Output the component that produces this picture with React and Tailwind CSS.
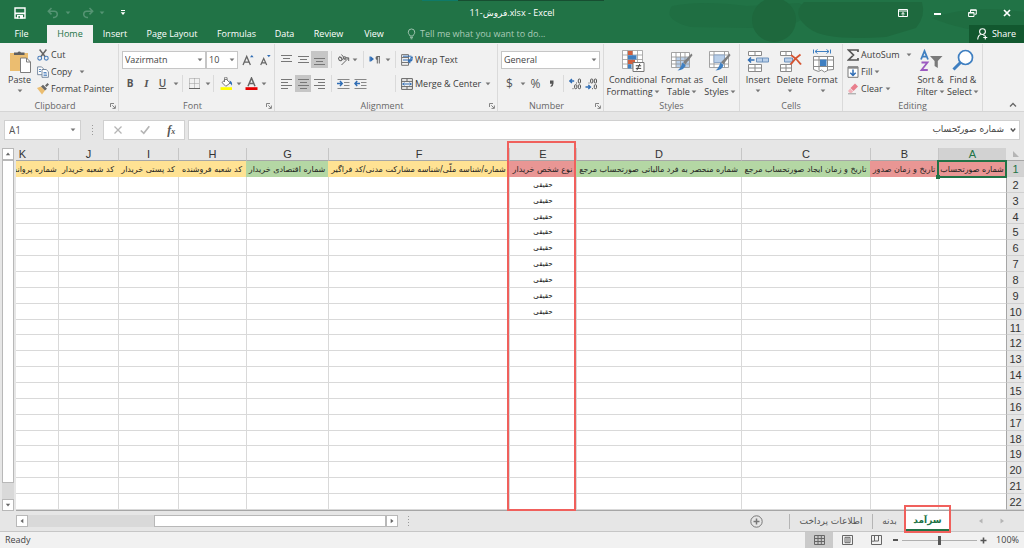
import React from "react";

const Caret = ({ className = "" }) => (
  <svg viewBox="0 0 6 4" className={`h-[4px] w-[6px] shrink-0 fill-[#777] ${className}`} aria-hidden="true">
    <path d="M.6.5h4.8L3 3.3z" />
  </svg>
);

const VSep = () => <span className="h-[17px] w-px shrink-0 bg-[#dadada]" />;

/* ---------- title bar ---------- */

const WindowArt = () => (
  <svg className="absolute right-0 top-0 h-full w-[360px]" viewBox="0 0 360 43" preserveAspectRatio="none" aria-hidden="true">
    <path d="M8 6q30-6 75 0l52-3q20 10-8 22l-40 3-60-1Q-2 20 8 6z" fill="#1f6e42" />
    <circle cx="110" cy="20" r="22" fill="#1e683d" />
    <path d="M140 2h118q4 14-6 26l-30 9q-60 4-76-8-20-14-6-27z" fill="#1e693e" />
    <path d="M268 18q40-14 92-6v18q-50 6-92-12z" fill="#1f6d41" />
  </svg>
);

function TitleBar() {
  return (
    <div className="relative grid h-[25px] grid-cols-[1fr_auto_1fr] items-center text-white">
      <div className="flex items-center pl-[14px]">
        <button aria-label="Save" className="w-[12px]">
          <svg viewBox="0 0 12 12" className="size-[12px]">
            <path d="M1 1h10v10H1z" fill="none" stroke="#fff" strokeWidth="1.4" />
            <path d="M1 5.6h10v1.6H1zM3 8h6v3.5H3z" fill="#fff" />
            <path d="M4.5 9h1.3v2.2H4.5z" fill="#217346" />
          </svg>
        </button>
        <button aria-label="Undo" className="ml-[21px]">
          <svg viewBox="0 0 12 12" className="size-[12px]" fill="none" stroke="#559473" strokeWidth="1.5">
            <path d="M4.5 1L1.3 4.2l3.2 3.2M1.5 4.2h5.7a3 3 0 010 6.2H6" />
          </svg>
        </button>
        <Caret className="ml-[6px] fill-[#559473]" />
        <button aria-label="Redo" className="ml-[11px]">
          <svg viewBox="0 0 12 12" className="size-[12px]" fill="none" stroke="#559473" strokeWidth="1.5">
            <path d="M7.5 1l3.2 3.2-3.2 3.2M10.500 4.200H4.800a3 3 0 000 6.200H6" />
          </svg>
        </button>
        <Caret className="ml-[5px] fill-[#559473]" />
        <button aria-label="Customize Quick Access Toolbar" className="ml-[15px]">
          <svg viewBox="0 0 6 6" className="size-[6px]" fill="#fff">
            <path d="M1 0h4v1H1zM.7 2.300h4.600L3 5z" />
          </svg>
        </button>
      </div>
      <h1 className="flex text-[9px]">
        <bdi className="font-['Open_Sans','DejaVu_Sans',sans-serif]" dir="ltr">
          11-&#x202B;فروش&#x202C;.xlsx - Excel
        </bdi>
      </h1>
      <div className="flex items-center justify-end">
        <button aria-label="Ribbon Display Options" className="flex w-[35px] justify-center">
          <svg viewBox="0 0 10 8" className="h-[8px] w-[10px]" fill="none" stroke="#fff">
            <path d="M.5.5h9v7h-9zM.5 2h9M5 6.800V3.800M3.400 5L5 3.600 6.600 5" />
          </svg>
        </button>
        <button aria-label="Minimize" className="flex w-[35px] justify-center">
          <span className="mt-[3px] h-[2px] w-[7px] bg-white" />
        </button>
        <button aria-label="Restore Down" className="flex w-[35px] justify-center">
          <svg viewBox="0 0 9 8" className="h-[8px] w-[9px]" fill="none" stroke="#fff">
            <path d="M.6 3.500h5.400v4H.6zM2.500 3V.8h5.800v4.400H6.500M2.500 1.300h5.800M.6 4h5.400" />
          </svg>
        </button>
        <button aria-label="Close" className="flex w-[34px] justify-center">
          <svg viewBox="0 0 8 8" className="size-[8px]" stroke="#fff" strokeWidth="1.7">
            <path d="M1 1l6 6M7 1L1 7" />
          </svg>
        </button>
      </div>
    </div>
  );
}

const tabs = [
  ["Insert", "w-[44px]"],
  ["Page Layout", "w-[70px]"],
  ["Formulas", "w-[59px]"],
  ["Data", "w-[37px]"],
  ["Review", "w-[51px]"],
  ["View", "w-[40px]"],
];

function TabBar() {
  return (
    <nav className="relative flex h-[18px] items-stretch text-[9px] text-white">
      <button className="w-[43px]">File</button>
      <button className="ml-[4px] w-[46px] bg-[#f1f1f1] text-[#217346]">Home</button>
      {tabs.map(([name, width]) => (
        <button key={name} className={width}>{name}</button>
      ))}
      <button className="ml-[13px] flex items-center gap-[4px] text-[#a9cbb8]">
        <svg viewBox="0 0 10 12" className="h-[12px] w-[9px]" fill="none" stroke="#a9cbb8">
          <path d="M3.200 8.200C3.200 6.800 1.400 6 1.400 4a3.600 3.600 0 017.200 0c0 2-1.800 2.800-1.800 4.200zM3.300 9.700h3.400M4 11.300h2" />
        </svg>
        Tell me what you want to do...
      </button>
      <button className="ml-auto flex w-[55px] items-center justify-center gap-[4px] bg-[#12582f]">
        <svg viewBox="0 0 11 12" className="h-[12px] w-[11px]" fill="none" stroke="#fff" strokeWidth="1.100">
          <circle cx="5.500" cy="3.600" r="2.900" />
          <path d="M.7 11.500c.2-3 1.400-4.600 3-5M6.500 7l1 .8M8.300 7.500v4M6.300 9.500h4" />
        </svg>
        Share
      </button>
    </nav>
  );
}

/* ---------- ribbon ---------- */

function Group({ title, width, launcher, children }) {
  return (
    <section aria-label={title} className={`flex h-[67px] shrink-0 flex-col border-r border-[#dadada] ${width}`}>
      <div className="flex h-[56px] items-start">{children}</div>
      <div className="flex h-[11px] items-center leading-none">
        <span className="flex-1 text-center text-[#666]">{title}</span>
        {launcher && (
          <button aria-label={`${title} settings`} className="mr-[2px]">
            <svg viewBox="0 0 6 6" className="size-[6px]" fill="none" stroke="#777">
              <path d="M.5 4V.5H4M2.300 2.300L5 5M5.400 2.500v2.900H2.500" strokeWidth=".9" />
            </svg>
          </button>
        )}
      </div>
    </section>
  );
}

function BigButton({ icon, lines, width, arrowBelow }) {
  return (
    <button className={`flex shrink-0 flex-col items-center pt-[4px] leading-[12px] ${width}`}>
      <span className="flex h-[26px] items-center">{icon}</span>
      <span className="whitespace-nowrap">{lines[0]}</span>
      {arrowBelow ? (
        <Caret className="mt-[3px]" />
      ) : (
        <span className="flex items-center gap-[1px] whitespace-nowrap">{lines[1]}<Caret /></span>
      )}
    </button>
  );
}

function SmallButton({ icon, label, caret, caretGap = "ml-[2px]" }) {
  return (
    <button className="flex h-[17px] items-center whitespace-nowrap">
      <span className="mr-[2px] flex w-[12px] shrink-0 justify-center">{icon}</span>
      {label}
      {caret && <Caret className={caretGap} />}
    </button>
  );
}

function IconButton({ label, width, active, children }) {
  return (
    <button aria-label={label} className={`flex h-[17px] shrink-0 items-center justify-center ${width} ${active ? "bg-[#c6c6c6]" : ""}`}>
      {children}
    </button>
  );
}

function Dropdown({ label, width, options }) {
  return (
    <span className={`relative flex h-[18px] items-center border border-[#c6c6c6] bg-white ${width}`}>
      <select aria-label={label} className="h-full w-full appearance-none bg-transparent pl-[2px] text-[9px] text-[#444] outline-none">
        {options.map((o) => <option key={o}>{o}</option>)}
      </select>
      <Caret className="pointer-events-none absolute right-[2px]" />
    </span>
  );
}

const Lines = ({ d }) => (
  <svg viewBox="0 0 11 11" className="size-[11px]" stroke="#777" fill="none"><path d={d} /></svg>
);

const PasteIcon = () => (
  <svg viewBox="0 0 22 23" className="h-[23px] w-[22px]">
    <path d="M1 3h18v18H1z" fill="#ebbd70" />
    <path d="M5 5V2.500h3.500a2 2 0 013.500 0h3.500V5z" fill="#5f5f5f" />
    <path d="M11.500 8h6l4 4v10.500h-10z" fill="#fff" stroke="#7d7d7d" />
    <path d="M17.500 8v4h4" fill="none" stroke="#7d7d7d" />
  </svg>
);
const CutIcon = () => (
  <svg viewBox="0 0 12 12" className="size-[12px]" fill="none">
    <path d="M2.600.5l5.600 7.200M9.400.5L3.800 7.700" stroke="#666" strokeWidth="1.500" />
    <circle cx="2.700" cy="9.200" r="1.900" stroke="#4a7ebb" strokeWidth="1.100" />
    <circle cx="9.300" cy="9.200" r="1.900" stroke="#4a7ebb" strokeWidth="1.100" />
  </svg>
);
const CopyIcon = () => (
  <svg viewBox="0 0 12 12" className="size-[12px]" fill="#fff" stroke="#6c7f96" strokeWidth=".9">
    <path d="M.6.900h4l1.800 1.800v6H.6z" />
    <path d="M5 3.500h4.200l2.200 2.200v5.600H5z" />
    <path d="M2 3.500h2M2 5.500h2M6.500 6.500h3M6.500 8h3.500M6.500 9.600h3.500" stroke="#4a7ebb" />
  </svg>
);
const PainterIcon = () => (
  <svg viewBox="0 0 12 12" className="size-[12px]">
    <path d="M0 5l4-1.500 4 4L5 11.500z" fill="#ebbd70" />
    <path d="M4 3.500l2-1.700 4 4-2 1.700zM8 2.500L10.500 0 12 1.500 9.500 4z" fill="#666" />
  </svg>
);
const FontSizeIcon = ({ up }) => (
  <svg viewBox="0 0 12 12" className="size-[12px]">
    {up ? (
      <path d="M1 11L4.700 2.500 8.400 11M2.300 8.200h4.800" fill="none" stroke="#666" strokeWidth="1.300" />
    ) : (
      <path d="M1.700 11L4.700 4.500 7.700 11M2.700 8.800h4" fill="none" stroke="#666" strokeWidth="1.200" />
    )}
    <path d={up ? "M8 3.200L9.800 1l1.800 2.200z" : "M8 1h3.600L9.800 3.200z"} fill="#2f6db5" />
  </svg>
);
const BorderIcon = () => (
  <svg viewBox="0 0 11 11" className="size-[11px]" fill="none" stroke="#999">
    <path d="M.5.500h10v10H.5zM5.500.5v10M.5 5.500h10" strokeDasharray="1 1" />
    <path d="M0 10.500h11" stroke="#666" />
  </svg>
);
const FillColorIcon = () => (
  <svg viewBox="0 0 13 13" className="size-[13px]">
    <path d="M2 5.500L6 2l4.200 4-4.400 3.300z" fill="#fff" stroke="#777" />
    <path d="M4.500 5V1.300a1.300 1.300 0 012.600 0V3" fill="none" stroke="#777" />
    <path d="M9.500 3.500q3.200 1 2.500 5.200-1-2-2-2.300z" fill="#2f6db5" />
    <path d="M.5 10.200h11.500v2.800H.5z" fill="#ffff00" />
  </svg>
);
const FontColorIcon = () => (
  <svg viewBox="0 0 13 13" className="size-[13px]">
    <path d="M3 9.200L6.500 1 10 9.200M4.200 6.500h4.600" fill="none" stroke="#666" strokeWidth="1.500" />
    <path d="M.5 10.200h12v2.800H.5z" fill="#e60000" />
  </svg>
);
const OrientationIcon = () => (
  <svg viewBox="0 0 13 12" className="h-[12px] w-[13px]" fill="none" stroke="#666">
    <ellipse cx="3.300" cy="4.800" rx="1.600" ry="1.900" transform="rotate(-40 3.300 4.800)" />
    <path d="M2.500 2.500l3.400 3.700M4.500.500l4 5M4.500 11L11.500 4M8.500 3.800h3.200V7" />
    <circle cx="7.600" cy="4" r="1.400" />
  </svg>
);
const RtlIcon = () => (
  <svg viewBox="0 0 12 10" className="h-[10px] w-[12px]">
    <path d="M.5 1.500h1.400v5H.5zM2 1.500L5 4 2 6.500z" fill="#2f6db5" />
    <path d="M8 1.500h3M8.300 1.500v7M10.300 1.500v7" stroke="#666" fill="none" />
    <path d="M8.500 1a2 2 0 000 4z" fill="#666" />
  </svg>
);
const IndentIcon = ({ flip }) => (
  <svg viewBox="0 0 13 11" className="h-[11px] w-[13px]" fill="none">
    <path d="M.5 1.500h12M7 4.500h5.500M7 7.500h5.500M.5 10.500h12" stroke="#888" />
    <path d={flip ? "M1 5.500h5M3.200 3L1 5.500 3.200 8" : "M0 5.500h5M3 3l2.200 2.500L3 8"} stroke="#2f6db5" strokeWidth="1.500" />
  </svg>
);
const WrapIcon = () => (
  <svg viewBox="0 0 12 12" className="size-[12px]" fill="none">
    <path d="M.6.600h6.900v10.700H.6zM.6 3.500h6.900M.6 8.500h6.900" stroke="#777" />
    <path d="M2 2.200h8.500M2 6h7.800V3.500h1.700" stroke="#2f6db5" />
    <path d="M11 2.500v2.800q0 2-3 2M9.300 5.500L7.500 7.300l1.800 1.800" stroke="#2f6db5" strokeWidth="1.200" />
  </svg>
);
const MergeIcon = () => (
  <svg viewBox="0 0 12 12" className="size-[12px]" fill="none">
    <path d="M.6.600h10.800v10.800H.6zM.6 3.400h10.800M.6 8.600h10.800M6 .6v2.800M6 8.600v2.800" stroke="#666" />
    <path d="M1.500 6h9M3.300 4.500L1.800 6l1.500 1.500M8.700 4.500L10.200 6 8.700 7.500" stroke="#2f6db5" />
  </svg>
);
const DecimalIcon = ({ more }) => (
  <svg viewBox="0 0 13 12" className="h-[12px] w-[13px]" fill="none" stroke="#555" strokeWidth="1">
    {more ? (
      <>
        <path d="M.5 3h4.700M3 1L.8 3 3 5" stroke="#2f6db5" strokeWidth="1.300" />
        <path d="M7.500 4.500v1M4 10.200v1" />
        <rect x="9.300" y="1" width="2.200" height="4" rx="1" />
        <rect x="5.600" y="6.700" width="2.200" height="4" rx="1" />
        <rect x="9.300" y="6.700" width="2.200" height="4" rx="1" />
      </>
    ) : (
      <>
        <path d="M.5 9h4.700M3.300 7l2.200 2-2.200 2" stroke="#2f6db5" strokeWidth="1.300" />
        <path d="M4 4.500v1M7.500 10.200v1" />
        <rect x="5.600" y="1" width="2.200" height="4" rx="1" />
        <rect x="9.300" y="1" width="2.200" height="4" rx="1" />
        <rect x="9.300" y="6.700" width="2.200" height="4" rx="1" />
      </>
    )}
  </svg>
);
const Brush = () => (
  <>
    <path d="M21.500 4.500l1 1.800-7 9-2.500-2z" fill="#7f7f7f" />
    <path d="M12.500 13.500l3 2.500q-1 5-8 5.500 3-2 5-8z" fill="#3f7fc1" />
  </>
);
const ConditionalIcon = () => (
  <svg viewBox="0 0 24 24" className="size-[24px]">
    <path d="M1.500 1.500h20v18h-20zM1.500 6h20M1.500 10.500h20M1.500 15h20M6.500 1.500v18M11.500 1.500v18M16.500 1.500v18" fill="#fff" stroke="#9a9a9a" strokeWidth=".8" />
    <path d="M7 1.900h4.500V6H7zM7 10.800h7V15H7z" fill="#d0603f" />
    <path d="M7 6.300h8.500v4.200H7zM7 15.300h3.500v4.200H7z" fill="#3f7fc1" />
    <path d="M12 13.500h11v9H12z" fill="#fff" stroke="#777" />
    <path d="M14.800 16.800h5.400M14.800 19.400h5.400M18.900 14.800l-3 6.400" stroke="#444" fill="none" />
  </svg>
);
const FormatTableIcon = () => (
  <svg viewBox="0 0 24 24" className="size-[24px]">
    <path d="M1.500 3.500h18v15h-18z" fill="#fff" />
    <path d="M6 8h13.500v10.500H6z" fill="#b9cfe9" />
    <path d="M1.500 3.500h18v15h-18zM1.500 8h18M1.500 11.500h18M1.500 15h18M6 3.500v15M10.500 3.500v15M15 3.500v15" fill="none" stroke="#9a9a9a" strokeWidth=".9" />
    <Brush />
  </svg>
);
const CellStylesIcon = () => (
  <svg viewBox="0 0 24 24" className="size-[24px]">
    <path d="M1.500 2.500h19v16h-19zM1.500 6h19M1.500 15h19M6 2.500v16M16.500 2.500v16" fill="#fff" stroke="#9a9a9a" strokeWidth=".9" />
    <path d="M6 6h10.500v7.500H6z" fill="#b9cfe9" stroke="#8fa8c8" />
    <Brush />
  </svg>
);
const InsertIcon = () => (
  <svg viewBox="0 0 24 22" className="h-[22px] w-[24px]" fill="none">
    <path d="M2.500 1.500h13v4h-13zM9 1.500v4M2.500 14.500h13v7h-13zM9 14.500v7M2.500 18h13" fill="#fff" stroke="#8a8a8a" />
    <path d="M10.500 8h12v4h-12zM16.500 8v4" fill="#b9cfe9" stroke="#6f93bd" />
    <path d="M2.500 10h6M5 7.500L2.500 10 5 12.500" stroke="#2f6db5" strokeWidth="1.500" />
  </svg>
);
const DeleteIcon = () => (
  <svg viewBox="0 0 24 22" className="h-[22px] w-[24px]" fill="none">
    <path d="M2.500 1.500h11v4h-11zM8 1.500v4M2.500 14.500h11v7h-11zM8 14.500v7M2.500 18h11" fill="#fff" stroke="#8a8a8a" />
    <path d="M6.500 8h8v4h-8z" fill="#b9cfe9" stroke="#6f93bd" />
    <path d="M13 5q5 3 10 9.500M22.500 4.500Q17 8 12.500 14.500" stroke="#d65532" strokeWidth="2" />
  </svg>
);
const FormatIcon = () => (
  <svg viewBox="0 0 24 24" className="size-[24px]" fill="none">
    <path d="M2.500 7.500h20v13l-5 .5-4 2-3-2-3 1.500-5-2zM2.500 11h20M2.500 17.500h20M8 7.500v14M16.500 7.500v14" fill="#fff" stroke="#8a8a8a" />
    <path d="M9 10.500h6.500v6.500H9z" fill="#3f7fc1" />
    <path d="M2.500.500v4M19.500.500v4M4 2.500h14M6.500.500L4 2.500l2.500 2M15.500.500l2.500 2-2.500 2" stroke="#3f7fc1" />
  </svg>
);
const SigmaIcon = () => (
  <svg viewBox="0 0 12 12" className="size-[12px]" fill="none" stroke="#555" strokeWidth="1.700">
    <path d="M11 3V1H1.500L6.500 6l-5 5H11V9" />
  </svg>
);
const FillDownIcon = () => (
  <svg viewBox="0 0 12 12" className="size-[12px]" fill="none">
    <path d="M1 .8h10v10.500H1z" fill="#fff" stroke="#777" />
    <path d="M1 .5h10v2.200H1z" fill="#888" />
    <path d="M6 3.500v6M3.300 6.800L6 9.500l2.700-2.700" stroke="#2f6db5" strokeWidth="1.500" />
  </svg>
);
const ClearIcon = () => (
  <svg viewBox="0 0 12 12" className="size-[12px]">
    <path d="M3.500 5L8 .5l3 3L6.500 8z" fill="#e87e8c" />
    <path d="M3.200 5.400l3 3L4.500 10H2.800L1 8z" fill="#f3b3bb" />
    <path d="M1 10.800h8" stroke="#999" />
  </svg>
);
const SortIcon = () => (
  <svg viewBox="0 0 24 24" className="size-[24px]" fill="none">
    <path d="M2 10.500L5.500 2 9 10.500M3.300 7.600h4.400" stroke="#3f7fc1" strokeWidth="1.800" />
    <path d="M2.500 13.500h6l-6 7.500h6.300" stroke="#9b59c0" strokeWidth="1.800" />
    <path d="M11 7h12.500l-4.700 5v7l-3.200-2v-5z" fill="#7a7a7a" />
  </svg>
);
const FindIcon = () => (
  <svg viewBox="0 0 24 24" className="size-[24px]" fill="none">
    <path d="M9.500 13.500L2.500 20.500" stroke="#3f7fc1" strokeWidth="3" />
    <circle cx="14.500" cy="8.500" r="7" stroke="#3f7fc1" strokeWidth="1.700" fill="#fff" />
  </svg>
);

function Ribbon() {
  return (
    <div className="flex h-[69px] shrink-0 items-start border-b border-[#d5d5d5] bg-[#f1f1f1] pt-[1px] text-[#3c3c3c]">
      <Group title="Clipboard" width="w-[119px]" launcher>
        <BigButton icon={<PasteIcon />} lines={["Paste"]} arrowBelow width="ml-[4px] w-[31px]" />
        <div className="ml-[2px] flex flex-col pt-[2px]">
          <SmallButton icon={<CutIcon />} label="Cut" />
          <SmallButton icon={<CopyIcon />} label="Copy" caret caretGap="ml-[7px]" />
          <SmallButton icon={<PainterIcon />} label="Format Painter" />
        </div>
      </Group>

      <Group title="Font" width="w-[156px]" launcher>
        <div className="flex flex-col gap-[6px] pl-[3px] pt-[7px]">
          <div className="flex items-center">
            <Dropdown label="Font" width="w-[84px]" options={["Vazirmatn", "Calibri", "Arial"]} />
            <Dropdown label="Font size" width="w-[32px]" options={["10", "11", "12"]} />
            <IconButton label="Increase font size" width="ml-[2px] w-[16px]"><FontSizeIcon up /></IconButton>
            <IconButton label="Decrease font size" width="w-[17px]"><FontSizeIcon /></IconButton>
          </div>
          <div className="flex items-center text-[10px] text-[#555]">
            <IconButton label="Bold" width="w-[16px]"><b>B</b></IconButton>
            <IconButton label="Italic" width="w-[17px]"><i className="font-['Liberation_Serif',serif] text-[11px] font-bold">I</i></IconButton>
            <IconButton label="Underline" width="w-[15px]"><u className="font-semibold">U</u></IconButton>
            <IconButton label="Underline styles" width="w-[12px]"><Caret /></IconButton>
            <VSep />
            <IconButton label="Borders" width="ml-[3px] w-[16px]"><BorderIcon /></IconButton>
            <IconButton label="Border styles" width="w-[11px]"><Caret /></IconButton>
            <VSep />
            <IconButton label="Fill color" width="ml-[4px] w-[16px]"><FillColorIcon /></IconButton>
            <IconButton label="Fill color choices" width="w-[9px]"><Caret /></IconButton>
            <IconButton label="Font color" width="w-[16px]"><FontColorIcon /></IconButton>
            <IconButton label="Font color choices" width="w-[9px]"><Caret /></IconButton>
          </div>
        </div>
      </Group>

      <Group title="Alignment" width="w-[223px]" launcher>
        <div className="flex flex-col gap-[7px] pl-[3px] pt-[7px]">
          <div className="flex items-center">
            <IconButton label="Top align" width="w-[17px]"><Lines d="M0 1.500h11M2 4.500h7M0 7.500h11" /></IconButton>
            <IconButton label="Middle align" width="w-[16px]"><Lines d="M0 2.500h11M2 5.500h7M0 8.500h11" /></IconButton>
            <IconButton label="Bottom align" width="w-[17px]" active><Lines d="M0 4.500h11M2 7.500h7M0 10.500h11" /></IconButton>
            <span className="w-[3px]" />
            <VSep />
            <IconButton label="Orientation" width="ml-[3px] w-[16px]"><OrientationIcon /></IconButton>
            <IconButton label="Orientation choices" width="w-[8px]"><Caret /></IconButton>
            <span className="w-[4px]" />
            <VSep />
            <IconButton label="Text direction" width="ml-[3px] w-[16px]"><RtlIcon /></IconButton>
            <IconButton label="Text direction choices" width="w-[9px]"><Caret /></IconButton>
            <span className="w-[3px]" />
            <VSep />
            <span className="w-[5px]" />
            <SmallButton icon={<WrapIcon />} label="Wrap Text" />
          </div>
          <div className="flex items-center">
            <IconButton label="Align left" width="w-[17px]"><Lines d="M0 1.500h11M0 4.500h7M0 7.500h11M0 10.500h7" /></IconButton>
            <IconButton label="Center" width="w-[16px]" active><Lines d="M0 1.500h11M2 4.500h7M0 7.500h11M2 10.500h7" /></IconButton>
            <IconButton label="Align right" width="w-[17px]"><Lines d="M0 1.500h11M4 4.500h7M0 7.500h11M4 10.500h7" /></IconButton>
            <span className="w-[3px]" />
            <VSep />
            <IconButton label="Increase indent" width="ml-[3px] w-[17px]"><IndentIcon /></IconButton>
            <IconButton label="Decrease indent" width="w-[16px]"><IndentIcon flip /></IconButton>
            <span className="w-[27px]" />
            <VSep />
            <span className="w-[5px]" />
            <SmallButton icon={<MergeIcon />} label="Merge & Center" caret caretGap="ml-[4px]" />
          </div>
        </div>
      </Group>

      <Group title="Number" width="w-[106px]" launcher>
        <div className="flex flex-col gap-[6px] pl-[3px] pt-[7px]">
          <Dropdown label="Number format" width="w-[99px]" options={["General", "Number", "Currency"]} />
          <div className="flex items-center text-[12px] text-[#555]">
            <IconButton label="Accounting format" width="w-[17px]">$</IconButton>
            <IconButton label="Accounting choices" width="w-[9px]"><Caret /></IconButton>
            <IconButton label="Percent style" width="w-[17px]">%</IconButton>
            <IconButton label="Comma style" width="w-[16px]">
              <svg viewBox="0 0 4 7" className="h-[7px] w-[4px]" fill="#555"><path d="M0 .5h3.500v3Q3.500 6 .8 7L.5 6q1.400-.8 1.300-2.200H0z" /></svg>
            </IconButton>
            <span className="w-[3px]" />
            <VSep />
            <IconButton label="Increase decimal" width="ml-[3px] w-[16px]"><DecimalIcon more /></IconButton>
            <IconButton label="Decrease decimal" width="w-[16px]"><DecimalIcon /></IconButton>
          </div>
        </div>
      </Group>

      <Group title="Styles" width="w-[136px]">
        <BigButton icon={<ConditionalIcon />} lines={["Conditional", "Formatting"]} width="ml-[2px] w-[54px]" />
        <BigButton icon={<FormatTableIcon />} lines={["Format as", "Table"]} width="w-[44px]" />
        <BigButton icon={<CellStylesIcon />} lines={["Cell", "Styles"]} width="w-[32px]" />
      </Group>

      <Group title="Cells" width="w-[103px]">
        <BigButton icon={<InsertIcon />} lines={["Insert"]} arrowBelow width="ml-[2px] w-[32px]" />
        <BigButton icon={<DeleteIcon />} lines={["Delete"]} arrowBelow width="w-[32px]" />
        <BigButton icon={<FormatIcon />} lines={["Format"]} arrowBelow width="w-[33px]" />
      </Group>

      <Group title="Editing" width="w-[140px]">
        <div className="ml-[4px] flex w-[67px] flex-col pt-[2px]">
          <SmallButton icon={<SigmaIcon />} label="AutoSum" caret caretGap="ml-[6px]" />
          <SmallButton icon={<FillDownIcon />} label="Fill" caret />
          <SmallButton icon={<ClearIcon />} label="Clear" caret />
        </div>
        <BigButton icon={<SortIcon />} lines={["Sort &", "Filter"]} width="w-[33px]" />
        <BigButton icon={<FindIcon />} lines={["Find &", "Select"]} width="w-[32px]" />
      </Group>

      <button aria-label="Collapse the Ribbon" className="ml-auto mr-[7px] self-end pb-[3px]">
        <svg viewBox="0 0 8 6" className="h-[6px] w-[8px]" fill="none" stroke="#666" strokeWidth="1.300"><path d="M1 4.500l3-3 3 3" /></svg>
      </button>
    </div>
  );
}

/* ---------- formula bar ---------- */

const Dots = () => (
  <span className="flex flex-col gap-[2px]" aria-hidden="true">
    <i className="size-[1px] bg-[#999]" /><i className="size-[1px] bg-[#999]" /><i className="size-[1px] bg-[#999]" /><i className="size-[1px] bg-[#999]" />
  </span>
);

function FormulaBar() {
  return (
    <div className="flex h-[36px] shrink-0 items-center px-[4px]">
      <div className="flex h-[20px] w-[77px] shrink-0 items-center border border-[#d0d0d0] bg-white pr-[4px]">
        <input aria-label="Name Box" defaultValue="A1" className="min-w-0 flex-1 bg-transparent pl-[4px] text-[10px] text-[#555] outline-none" />
        <Caret />
      </div>
      <span className="flex w-[22px] shrink-0 justify-center"><Dots /></span>
      <div className="flex h-[20px] w-[82px] shrink-0 items-center justify-around border border-[#d0d0d0] bg-white">
        <button aria-label="Cancel">
          <svg viewBox="0 0 10 10" className="size-[10px]" stroke="#b5b5b5" strokeWidth="1.300"><path d="M1.500 1.500l7 7M8.500 1.500l-7 7" /></svg>
        </button>
        <button aria-label="Enter">
          <svg viewBox="0 0 10 10" className="size-[10px]" fill="none" stroke="#b5b5b5" strokeWidth="1.700"><path d="M.8 5.500l3 2.800 5.500-7" /></svg>
        </button>
        <button aria-label="Insert Function" className="font-['Liberation_Serif',serif] text-[12px] font-bold italic leading-none text-[#555]">
          f<span className="text-[8px]">x</span>
        </button>
      </div>
      <div className="ml-[3px] flex h-[20px] flex-1 items-center border border-[#d0d0d0] bg-white pr-[3px]">
        <input
          aria-label="Formula Bar"
          dir="rtl"
          defaultValue="شماره صورتّحساب"
          className="min-w-0 flex-1 bg-transparent pr-[6px] font-['DejaVu_Sans',sans-serif] text-[9px] text-[#444] outline-none"
        />
        <svg viewBox="0 0 6 6" className="size-[6px]" fill="none" stroke="#555" strokeWidth="1.400"><path d="M.8 1.500L3 4.200l2.200-2.700" /></svg>
      </div>
    </div>
  );
}

/* ---------- sheet ---------- */

const RED = "bg-[#e99694]";
const GREEN = "bg-[#b4d7a4]";
const YELLOW = "bg-[#ffe293]";

const columns = [
  { id: "A", text: "شماره صورتحساب", fill: RED, width: "w-[68px]" },
  { id: "B", text: "تاریخ و زمان صدور", fill: RED, width: "w-[68px]" },
  { id: "C", text: "تاریخ و زمان ایجاد صورتحساب مرجع", fill: GREEN, width: "w-[129px]" },
  { id: "D", text: "شماره منحصر به فرد مالیاتی صورتحساب مرجع", fill: GREEN, width: "w-[165px]" },
  { id: "E", text: "نوع شخص خریدار", fill: RED, width: "w-[67px]" },
  { id: "F", text: "شماره/شناسه ملّی/شناسه مشارکت مدنی/کد فراگیر", fill: YELLOW, width: "w-[181px]" },
  { id: "G", text: "شماره اقتصادی خریدار", fill: GREEN, width: "w-[82px]" },
  { id: "H", text: "کد شعبه فروشنده", fill: YELLOW, width: "w-[68px]" },
  { id: "I", text: "کد پستی خریدار", fill: YELLOW, width: "w-[60px]" },
  { id: "J", text: "کد شعبه خریدار", fill: YELLOW, width: "w-[60px]" },
  { id: "K", text: "شماره پروانه گمرکی", fill: YELLOW, width: "" },
];
const rows = Array.from({ length: 22 }, (_, i) => i + 1);

const ScrollArrow = ({ label, d }) => (
  <button aria-label={label} className="flex size-[12px] shrink-0 items-center justify-center border border-[#b8b8b8] bg-white">
    <svg viewBox="0 0 6 6" className="size-[6px]" fill="#666"><path d={d} /></svg>
  </button>
);

function Sheet() {
  return (
    <div className="relative flex min-h-0 flex-1">
      <div className="flex w-[16px] shrink-0 flex-col items-center pr-[1px]">
        <ScrollArrow label="Scroll up" d="M.8 4.300h4.400L3 1.500z" />
        <div className="flex w-[12px] flex-1 flex-col bg-[#d9d9d9] pb-[16px]">
          <div className="flex-1 border border-[#b8b8b8] bg-white" />
        </div>
        <ScrollArrow label="Scroll down" d="M.8 1.700h4.400L3 4.500z" />
      </div>
      <div dir="rtl" className="min-w-0 flex-1 overflow-hidden border-b border-[#a6a6a6] bg-white">
        <table className="h-full w-full min-w-[1038px] table-fixed border-separate border-spacing-0 font-['DejaVu_Sans',sans-serif] text-[8px] leading-none">
          <colgroup>
            <col className="w-[18px]" />
            {columns.map((c) => <col key={c.id} className={c.width} />)}
          </colgroup>
          <thead>
            <tr className="h-[13px] bg-[#e6e6e6] font-['Liberation_Sans',sans-serif] text-[11px] text-[#333]">
              <th aria-label="Select all" className="h-[13px] border-b border-[#a6a6a6] p-0">
                <svg viewBox="0 0 6 6" className="ml-auto mr-[5px] size-[6px]" fill="#b5b5b5"><path d="M0 0v6h6z" /></svg>
              </th>
              {columns.map((c) => (
                <th
                  key={c.id}
                  scope="col"
                  className={`h-[13px] border-b border-l border-l-[#c6c6c6] p-0 font-normal ${c.id === "A" ? "border-b-[#217346] bg-[#d2d2d2] text-[#217346]" : "border-b-[#a6a6a6]"}`}
                >
                  {c.id}
                </th>
              ))}
            </tr>
          </thead>
          <tbody>
            {rows.map((n) => (
              <tr key={n}>
                <th
                  scope="row"
                  className={`border-b border-l border-b-[#d0d0d0] px-0 pb-0 pt-[2px] text-center font-['Liberation_Sans',sans-serif] text-[11px] font-normal ${n === 1 ? "border-l-[#217346] bg-[#d2d2d2] text-[#217346]" : "border-l-[#a6a6a6] bg-[#e6e6e6] text-[#333]"}`}
                >
                  {n}
                </th>
                {columns.map((c) => {
                  if (n === 1) {
                    return (
                      <td
                        key={c.id}
                        className={`whitespace-nowrap px-0 pb-0 pt-[2px] text-center text-[#222] ${c.fill} ${c.id === "A" ? "relative outline-2 -outline-offset-1 outline-[#217346]" : "overflow-hidden"}`}
                      >
                        {c.text}
                        {c.id === "A" && <span className="absolute -bottom-[2px] -left-[2px] size-[4px] bg-[#217346]" />}
                      </td>
                    );
                  }
                  return (
                    <td key={c.id} className="border-b border-l border-[#d9d9d9] px-0 pb-0 pt-[2px] text-center text-[7px] text-[#111]">
                      {c.id === "E" && n <= 10 ? "حقیقی" : null}
                    </td>
                  );
                })}
              </tr>
            ))}
          </tbody>
        </table>
      </div>
      <div className="pointer-events-none absolute -top-[7px] bottom-0 right-[448px] z-10 w-[69px] border-2 border-[#f0605c]" />
    </div>
  );
}

function SheetTabs() {
  return (
    <div className="flex h-[21px] shrink-0 items-stretch border-b border-[#c6c6c6] pl-[16px]">
      <div className="flex w-[382px] items-center">
        <ScrollArrow label="Scroll left" d="M4.300.800v4.400L1.500 3z" />
        <div className="flex h-[12px] flex-1 bg-[#d9d9d9] pl-[126px]">
          <div className="flex-1 border border-[#b8b8b8] bg-white" />
        </div>
        <ScrollArrow label="Scroll right" d="M1.700.800v4.400L4.500 3z" />
      </div>
      <span className="ml-[10px] flex items-center"><Dots /></span>
      <div className="ml-auto flex items-center font-['DejaVu_Sans',sans-serif] text-[9px] text-[#555]">
        <button aria-label="New sheet" className="mr-[26px]">
          <svg viewBox="0 0 13 13" className="size-[13px]" fill="none" stroke="#777"><circle cx="6.500" cy="6.500" r="5.700" /><path d="M6.500 3.500v6M3.500 6.500h6" strokeWidth="1.500" /></svg>
        </button>
        <button className="h-[15px] w-[83px] whitespace-nowrap border-l border-[#b5b5b5] leading-none">اطلاعات پرداخت</button>
        <button className="h-[15px] w-[34px] whitespace-nowrap border-l border-[#b5b5b5] leading-none">بدنه</button>
        <button aria-current="page" className="relative h-full w-[43px] border-b-2 border-[#217346] bg-white font-bold leading-none text-[#217346]">
          سرآمد
          <span className="pointer-events-none absolute -bottom-[4px] -left-[2px] -right-[2px] -top-[6px] border-2 border-[#f0605c]" />
        </button>
        <button aria-label="Previous sheet" className="ml-[29px]"><svg viewBox="0 0 6 6" className="size-[6px]" fill="#b5b5b5"><path d="M4.500.500v5L1 3z" /></svg></button>
        <button aria-label="Next sheet" className="ml-[15px] mr-[19px]"><svg viewBox="0 0 6 6" className="size-[6px]" fill="#b5b5b5"><path d="M1.500.500v5L5 3z" /></svg></button>
      </div>
    </div>
  );
}

function StatusBar() {
  return (
    <footer className="flex h-[16px] shrink-0 items-center bg-[#f1f1f1] text-[#444]">
      <span className="pl-[5px]">Ready</span>
      <div className="ml-auto flex h-full items-center">
        <button aria-label="Normal view" className="flex h-full w-[28px] items-center justify-center bg-[#cacaca]">
          <svg viewBox="0 0 11 10" className="h-[10px] w-[11px]" fill="none" stroke="#666"><path d="M.5.500h10v9H.5zM.5 3.500h10M.5 6.500h10M4 .5v9M7.300.500v9" /></svg>
        </button>
        <button aria-label="Page layout view" className="flex h-full w-[29px] items-center justify-center">
          <svg viewBox="0 0 11 10" className="h-[10px] w-[11px]" fill="none" stroke="#666"><path d="M.5.500h10v9H.5zM3 2.300h5v5.400H3zM4 4h3M4 6h3" /></svg>
        </button>
        <button aria-label="Page break preview" className="flex h-full w-[29px] items-center justify-center">
          <svg viewBox="0 0 11 10" className="h-[10px] w-[11px]" fill="none" stroke="#666"><path d="M.5.500h10v9H.5zM3.500.5v5.500h4V.5M.5 6.200h3" /></svg>
        </button>
        <button aria-label="Zoom out" className="flex w-[9px] justify-center"><span className="h-[2px] w-[5px] bg-[#555]" /></button>
        <input
          type="range"
          aria-label="Zoom"
          min="10"
          max="190"
          defaultValue="100"
          className="mx-[2px] h-[9px] w-[75px] appearance-none bg-[linear-gradient(#b0b0b0,#b0b0b0)] bg-[length:100%_1px] bg-center bg-no-repeat [&::-webkit-slider-thumb]:h-[9px] [&::-webkit-slider-thumb]:w-[3px] [&::-webkit-slider-thumb]:appearance-none [&::-webkit-slider-thumb]:bg-[#555]"
        />
        <button aria-label="Zoom in" className="flex w-[9px] justify-center">
          <svg viewBox="0 0 7 7" className="size-[7px]" stroke="#555" strokeWidth="1.600"><path d="M3.500.5v6M.5 3.500h6" /></svg>
        </button>
        <span className="w-[36px] pr-[5px] text-right">100%</span>
      </div>
    </footer>
  );
}

export default function App() {
  return (
    <div className="flex h-screen flex-col overflow-hidden bg-[#e6e6e6] font-['Open_Sans','DejaVu_Sans',sans-serif] text-[9px]">
      <header className="relative shrink-0 bg-[#217346]">
        <WindowArt />
        <span className="absolute left-[422px] top-0 h-px w-[36px] bg-[#0f7a68]" />
        <span className="absolute left-[458px] top-0 h-px w-[146px] bg-[#174e31]" />
        <TitleBar />
        <TabBar />
      </header>
      <Ribbon />
      <FormulaBar />
      <Sheet />
      <SheetTabs />
      <StatusBar />
    </div>
  );
}
